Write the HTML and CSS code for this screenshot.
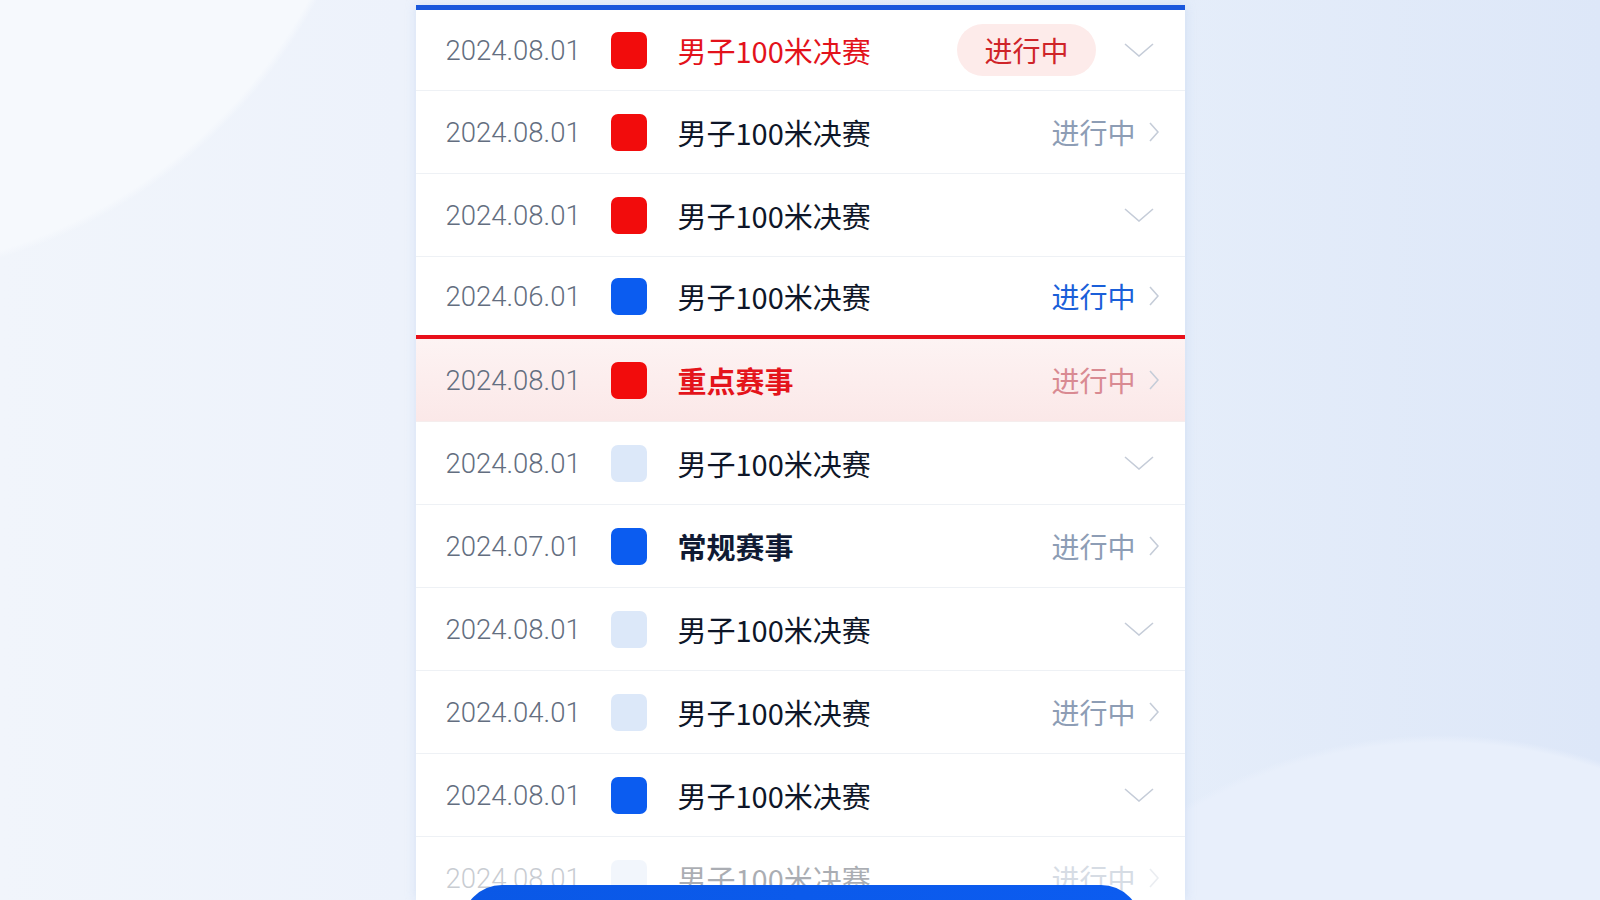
FILE: index.html
```html
<!DOCTYPE html>
<html lang="zh-CN">
<head>
    <meta charset="UTF-8">
    <meta name="viewport" content="width=device-width, initial-scale=1.0">
    <title>赛事列表</title>
    <link rel="stylesheet" href="styles.css">
</head>
<body>
    <div class="panel">
        <ul class="event-list">
            <li class="event-row first">
                <span class="date">2024.08.01</span>
                <span class="tag tag-red"></span>
                <span class="title title-red">男子100米决赛</span>
                <span class="status-pill">进行中</span>
                <svg class="chev-down" viewBox="0 0 30 14"><path d="M1 1 L15 13 L29 1"/></svg>
            </li>
            <li class="event-row">
                <span class="date">2024.08.01</span>
                <span class="tag tag-red"></span>
                <span class="title">男子100米决赛</span>
                <span class="status">进行中</span>
                <svg class="chev-right" viewBox="0 0 10 20"><path d="M1 1 L9 10 L1 19"/></svg>
            </li>
            <li class="event-row">
                <span class="date">2024.08.01</span>
                <span class="tag tag-red"></span>
                <span class="title">男子100米决赛</span>
                <svg class="chev-down" viewBox="0 0 30 14"><path d="M1 1 L15 13 L29 1"/></svg>
            </li>
            <li class="event-row before-key">
                <span class="date">2024.06.01</span>
                <span class="tag tag-blue"></span>
                <span class="title">男子100米决赛</span>
                <span class="status status-blue">进行中</span>
                <svg class="chev-right" viewBox="0 0 10 20"><path d="M1 1 L9 10 L1 19"/></svg>
            </li>
            <li class="event-row key">
                <span class="date">2024.08.01</span>
                <span class="tag tag-red"></span>
                <span class="title title-key">重点赛事</span>
                <span class="status status-pink">进行中</span>
                <svg class="chev-right" viewBox="0 0 10 20"><path d="M1 1 L9 10 L1 19"/></svg>
            </li>
            <li class="event-row">
                <span class="date">2024.08.01</span>
                <span class="tag tag-light"></span>
                <span class="title">男子100米决赛</span>
                <svg class="chev-down" viewBox="0 0 30 14"><path d="M1 1 L15 13 L29 1"/></svg>
            </li>
            <li class="event-row">
                <span class="date">2024.07.01</span>
                <span class="tag tag-blue"></span>
                <span class="title title-bold">常规赛事</span>
                <span class="status">进行中</span>
                <svg class="chev-right" viewBox="0 0 10 20"><path d="M1 1 L9 10 L1 19"/></svg>
            </li>
            <li class="event-row">
                <span class="date">2024.08.01</span>
                <span class="tag tag-light"></span>
                <span class="title">男子100米决赛</span>
                <svg class="chev-down" viewBox="0 0 30 14"><path d="M1 1 L15 13 L29 1"/></svg>
            </li>
            <li class="event-row">
                <span class="date">2024.04.01</span>
                <span class="tag tag-light"></span>
                <span class="title">男子100米决赛</span>
                <span class="status">进行中</span>
                <svg class="chev-right" viewBox="0 0 10 20"><path d="M1 1 L9 10 L1 19"/></svg>
            </li>
            <li class="event-row">
                <span class="date">2024.08.01</span>
                <span class="tag tag-blue"></span>
                <span class="title">男子100米决赛</span>
                <svg class="chev-down" viewBox="0 0 30 14"><path d="M1 1 L15 13 L29 1"/></svg>
            </li>
            <li class="event-row faded">
                <span class="date">2024.08.01</span>
                <span class="tag tag-light"></span>
                <span class="title">男子100米决赛</span>
                <span class="status">进行中</span>
                <svg class="chev-right" viewBox="0 0 10 20"><path d="M1 1 L9 10 L1 19"/></svg>
            </li>
        </ul>
        <div class="bottom-button"></div>
    </div>
</body>
</html>
```

FILE: styles.css
```css
:root {
    --blue: #0b5cf0;
    --red: #f20c0c;
    --text-dark: #0e1628;
    --date-color: #636e80;
    --status-gray: #8d9db5;
    --divider: #eef1f5;
    --chevron: #c5ccd8;
}

html, body {
    margin: 0;
    height: 100%;
    overflow: hidden;
}

body {
    font-family: "Noto Sans CJK SC", "Noto Sans", sans-serif;
    background:
        radial-gradient(circle 530px at -150px -250px, #f6f9fd 98.5%, transparent 100%),
        radial-gradient(circle 500px at 1440px 1235px, #e8effb 98.5%, transparent 100%),
        linear-gradient(90deg, #f1f5fb 0%, #edf2fb 25%, #e6eefa 70%, #dde7f8 100%);
}

.panel {
    position: relative;
    width: 769px;
    height: 890px;
    margin: 5px auto 0;
    overflow: hidden;
    background: #fff;
    border-top: 5px solid #1a57dc;
    box-shadow: 0 0 10px rgba(170, 195, 235, 0.35);
}

.event-list {
    list-style: none;
    margin: 0;
    padding: 0;
}

.event-row {
    display: flex;
    align-items: center;
    height: 82px;
    padding: 0 26px 0 30px;
    border-bottom: 1px solid var(--divider);
}

.event-row.first {
    height: 80px;
}

.event-row.before-key {
    height: 78px;
    border-bottom: 4px solid #e8101a;
}

.event-row.key {
    background: linear-gradient(180deg, #fdf3f3 0%, #fbe8e8 100%);
    border-bottom-color: #f5eded;
}

.event-row.faded {
    opacity: 0.35;
}

.date {
    width: 165px;
    flex-shrink: 0;
    font-family: Roboto, "Liberation Sans", sans-serif;
    font-weight: 300;
    font-size: 27.5px;
    color: var(--date-color);
}

.tag {
    width: 36px;
    height: 37px;
    border-radius: 7px;
    flex-shrink: 0;
    margin-right: 31px;
}

.tag-red { background: var(--red); }
.tag-blue { background: var(--blue); }
.tag-light { background: #dce8f9; }

.title {
    flex: 1;
    font-size: 29px;
    color: var(--text-dark);
    white-space: nowrap;
}

.title-red {
    color: #e3121b;
}

.title-key {
    color: #e4141b;
    font-weight: 700;
}

.title-bold {
    font-weight: 700;
    color: #101a33;
}

.status {
    font-size: 28px;
    color: var(--status-gray);
    margin-right: 13px;
}

.status-blue { color: #1a5fd9; }
.status-pink { color: #d98a92; }

.status-pill {
    height: 52px;
    line-height: 52px;
    padding: 0 27px;
    border-radius: 26px;
    background: #fdebea;
    color: #cf2429;
    font-size: 28px;
    margin-right: 28px;
}

.chev-down {
    width: 30px;
    height: 14px;
    margin-right: 5px;
    fill: none;
    stroke: var(--chevron);
    stroke-width: 1.6;
}

.chev-right {
    width: 10px;
    height: 20px;
    fill: none;
    stroke: var(--chevron);
    stroke-width: 1.6;
}

.bottom-button {
    position: absolute;
    left: 46px;
    right: 44px;
    top: 875px;
    height: 80px;
    border-radius: 40px;
    background: linear-gradient(90deg, #0a58e6, #0c5cf0);
}
```
